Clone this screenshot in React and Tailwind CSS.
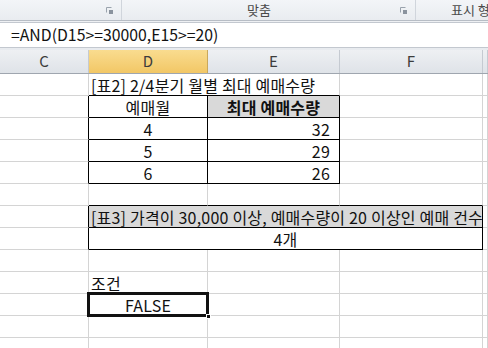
import React from "react";

const FONT = { fontFamily: '"Noto Sans CJK KR", "Noto Sans", sans-serif' };

function Launcher() {
    return (
        <svg width="7" height="7" viewBox="0 0 7 7" className="shrink-0">
            <path d="M0.5 0.5 H5.5 M0.5 0.5 V5.5" stroke="#9aa3ad" strokeWidth="1" fill="none" />
            <rect x="3" y="3" width="4" height="4" fill="#8a939e" />
        </svg>
    );
}

function Cell({ className = "", children }) {
    return (
        <div className={`h-[22px] border-r border-b border-[#d4d4d4] flex items-center whitespace-nowrap text-[16px] tracking-[0.2px] text-[#111] ${className}`}>
            {children}
        </div>
    );
}

export default function App() {
    const headers = ["C", "D", "E", "F", ""];

    return (
        <div className="w-[488px] h-[348px] overflow-hidden bg-white" style={FONT}>
            {/* Ribbon strip */}
            <div className="h-[21px] flex bg-gradient-to-b from-[#f3f5f8] to-[#e9ecf0] border-b border-[#b7bdc5] text-[13px] text-[#4a4a4a]">
                <div className="w-[122px] flex items-center justify-end pr-[8px] border-r border-[#d0d5dc]">
                    <Launcher />
                </div>
                <div className="w-[294px] flex items-center border-r border-[#d0d5dc]">
                    <span className="pl-[125px] flex-1">맞춤</span>
                    <span className="pr-[8px]"><Launcher /></span>
                </div>
                <div className="flex-1 flex items-center pl-[35px] whitespace-nowrap overflow-hidden">표시 형식</div>
            </div>
            <div className="h-[1px] bg-[#eef0f3]" />

            {/* Formula bar */}
            <div className="h-[26px] bg-white border-t border-b border-[#c3c8cf] flex items-center pl-[11px] text-[15.8px] text-[#111]">
                =AND(D15&gt;=30000,E15&gt;=20)
            </div>
            <div className="h-[2px] bg-[#e8ebef]" />

            {/* Column headers */}
            <div className="grid grid-cols-[89px_119px_132px_143px_1fr] h-[24px] border-b border-[#9fa6af]">
                {headers.map((h, i) => (
                    <div
                        key={i}
                        className={`flex items-center justify-center border-r text-[15px] text-[#3c3c3c] ${
                            h === "D"
                                ? "bg-gradient-to-b from-[#f9dc8f] to-[#f2c765] border-[#c9a85c]"
                                : "bg-gradient-to-b from-[#eef0f3] to-[#dfe3e8] border-[#c5cad1]"
                        }`}
                    >
                        {h}
                    </div>
                ))}
            </div>

            {/* Sheet cells */}
            <div className="grid grid-cols-[89px_119px_132px_143px_1fr]">
                {/* row: title */}
                <Cell />
                <Cell className="col-span-2 pl-[2px] border-b-black">[표2] 2/4분기 월별 최대 예매수량</Cell>
                <Cell />
                <Cell />

                {/* row: header */}
                <Cell className="border-r-black" />
                <Cell className="justify-center border-r-black border-b-black">예매월</Cell>
                <Cell className="justify-center font-bold bg-[#d9d9d9] border-r-black border-b-black">최대 예매수량</Cell>
                <Cell />
                <Cell />

                {[["4", "32"], ["5", "29"], ["6", "26"]].map(([m, q]) => (
                    <React.Fragment key={m}>
                        <Cell className="border-r-black" />
                        <Cell className="justify-center border-r-black border-b-black">{m}</Cell>
                        <Cell className="justify-end pr-[9px] border-r-black border-b-black">{q}</Cell>
                        <Cell />
                        <Cell />
                    </React.Fragment>
                ))}

                {/* empty row */}
                <Cell />
                <Cell className="border-b-black" />
                <Cell className="border-b-black" />
                <Cell className="border-b-black" />
                <Cell />

                {/* row: table 3 title */}
                <Cell className="border-r-black" />
                <Cell className="col-span-3 pl-[2px] bg-[#d9d9d9] border-r-black border-b-black">
                    [표3] 가격이 30,000 이상, 예매수량이 20 이상인 예매 건수
                </Cell>
                <Cell />

                {/* row: result */}
                <Cell className="border-r-black" />
                <Cell className="col-span-3 justify-center border-r-black border-b-black">4개</Cell>
                <Cell />

                {/* empty */}
                <Cell /><Cell /><Cell /><Cell /><Cell />

                {/* 조건 */}
                <Cell />
                <Cell className="pl-[2px]">조건</Cell>
                <Cell /><Cell /><Cell />

                {/* FALSE selected */}
                <Cell />
                <Cell className="relative justify-center">
                    FALSE
                    <div className="absolute left-[-2px] top-[-2px] right-[-2px] bottom-[-2px] border-[3px] border-[#111]" />
                    <div className="absolute right-[-4px] bottom-[-4px] w-[5px] h-[5px] bg-[#111] border border-white" />
                </Cell>
                <Cell /><Cell /><Cell />

                <Cell /><Cell /><Cell /><Cell /><Cell />
                <Cell /><Cell /><Cell /><Cell /><Cell />
            </div>
        </div>
    );
}
